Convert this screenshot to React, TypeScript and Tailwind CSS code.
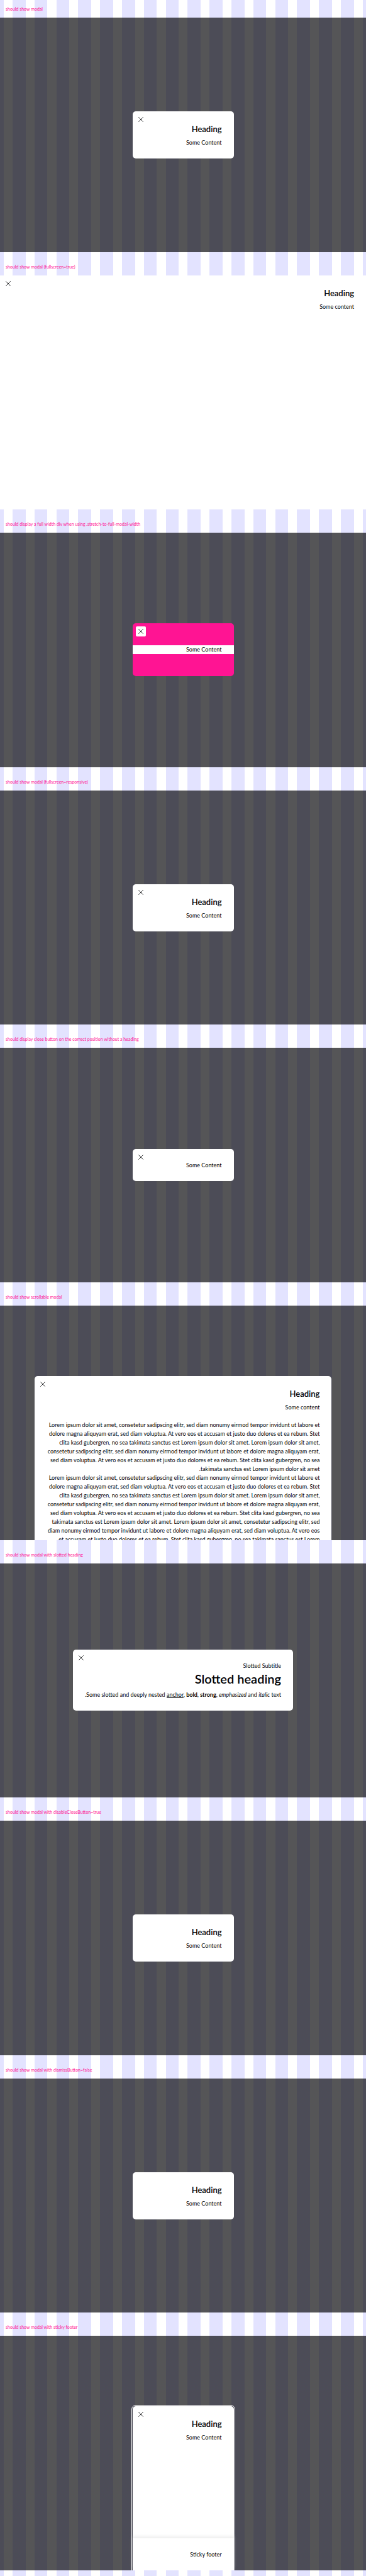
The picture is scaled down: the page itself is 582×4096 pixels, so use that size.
import React from "react";

const LOREM =
  "Lorem ipsum dolor sit amet, consetetur sadipscing elitr, sed diam nonumy eirmod tempor invidunt ut labore et dolore magna aliquyam erat, sed diam voluptua. At vero eos et accusam et justo duo dolores et ea rebum. Stet clita kasd gubergren, no sea takimata sanctus est Lorem ipsum dolor sit amet.";

function CloseButton() {
  return (
    <button
      type="button"
      aria-label="Dismiss modal"
      className="absolute top-[5px] left-[5px] flex size-4 items-center justify-center rounded-[2px] bg-white"
    >
      <svg viewBox="0 0 14 14" className="size-2 text-[#010205]" fill="none" stroke="currentColor" strokeWidth="1.5">
        <path d="M0.5 0.5 13.5 13.5M13.5 0.5 0.5 13.5" />
      </svg>
    </button>
  );
}

function Heading() {
  return <h2 className="mb-[5px] text-[13px] leading-[19px] font-semibold">Heading</h2>;
}

type ModalProps = {
  children: React.ReactNode;
  className?: string;
  dismissible?: boolean;
};

function Modal({ children, className = "min-w-[161px] rounded-[5px] px-[19px] pt-[19px] pb-[18px]", dismissible = true }: ModalProps) {
  return (
    <div role="dialog" dir="rtl" className={`relative bg-white text-[9px] leading-[14px] text-[#010205] ${className}`}>
      {dismissible && <CloseButton />}
      {children}
    </div>
  );
}

type StoryProps = {
  title: string;
  children: React.ReactNode;
  align?: string;
};

function Story({ title, children, align = "items-center justify-center" }: StoryProps) {
  return (
    <section className="flex flex-col pb-[9px]">
      <h1 className="flex h-7 items-center px-[9px] text-[7px] leading-[10px] text-[#ff1493]">{title}</h1>
      <div className="relative min-h-[372px] flex-1 overflow-hidden">
        <div className={`absolute inset-0 flex overflow-hidden bg-[#010205]/67 ${align}`}>{children}</div>
      </div>
    </section>
  );
}

export default function App() {
  return (
    <main className="grid min-h-screen auto-rows-fr bg-white bg-[repeating-linear-gradient(90deg,#e3e3ff_0,#e3e3ff_0.98%,transparent_0.98%,transparent_3.43%,#e3e3ff_3.43%,#e3e3ff_5.98%)] font-[Lato,sans-serif]">
      <Story title="should show modal">
        <Modal>
          <Heading />
          <p>Some Content</p>
        </Modal>
      </Story>
      <Story title="should show modal (fullscreen=true)" align="items-stretch">
        <Modal className="flex-1 px-[19px] pt-[19px]">
          <Heading />
          <p>Some content</p>
        </Modal>
      </Story>
      <Story title="should display a full width div when using .stretch-to-full-modal-width">
        <Modal className="min-w-[161px] overflow-hidden rounded-[5px]">
          <div className="bg-[#ff1493] py-[35px]">
            <p className="bg-white px-[19px]">Some Content</p>
          </div>
        </Modal>
      </Story>
      <Story title="should show modal (fullscreen=responsive)">
        <Modal>
          <Heading />
          <p>Some Content</p>
        </Modal>
      </Story>
      <Story title="should display close button on the correct position without a heading">
        <Modal>
          <p>Some Content</p>
        </Modal>
      </Story>
      <Story title="should show scrollable modal" align="items-start justify-center pt-28">
        <Modal className="w-[81.25%] rounded-[5px] px-[19px] pt-[19px] pb-[18px]">
          <Heading />
          <p className="mb-[14px]">Some content</p>
          <p>
            {LOREM} {LOREM}
          </p>
          <p>
            {LOREM} {LOREM} {LOREM}
          </p>
        </Modal>
      </Story>
      <Story title="should show modal with slotted heading">
        <Modal>
          <p>Slotted Subtitle</p>
          <h2 className="mb-[5px] text-[20px] leading-[27px] font-semibold">Slotted heading</h2>
          <p>
            Some slotted and deeply nested <a href="#anchor" className="underline">anchor</a>, <b>bold</b>, <strong>strong</strong>,{" "}
            <em>emphasized</em> and <i>italic</i> text.
          </p>
        </Modal>
      </Story>
      <Story title="should show modal with disableCloseButton=true">
        <Modal dismissible={false}>
          <Heading />
          <p>Some Content</p>
        </Modal>
      </Story>
      <Story title="should show modal with dismissButton=false">
        <Modal dismissible={false}>
          <Heading />
          <p>Some Content</p>
        </Modal>
      </Story>
      <Story title="should show modal with sticky footer" align="items-stretch justify-center pt-28">
        <Modal className="flex min-w-[161px] flex-col rounded-t-[5px] pt-[19px] outline outline-offset-1 outline-white">
          <div className="flex-1 px-[19px]">
            <Heading />
            <p>Some Content</p>
          </div>
          <footer className="bg-white px-[19px] pt-[19px] pb-[18px] shadow-[0_-3px_5px_rgba(204,204,204,0.35)]">Sticky footer</footer>
        </Modal>
      </Story>
    </main>
  );
}
